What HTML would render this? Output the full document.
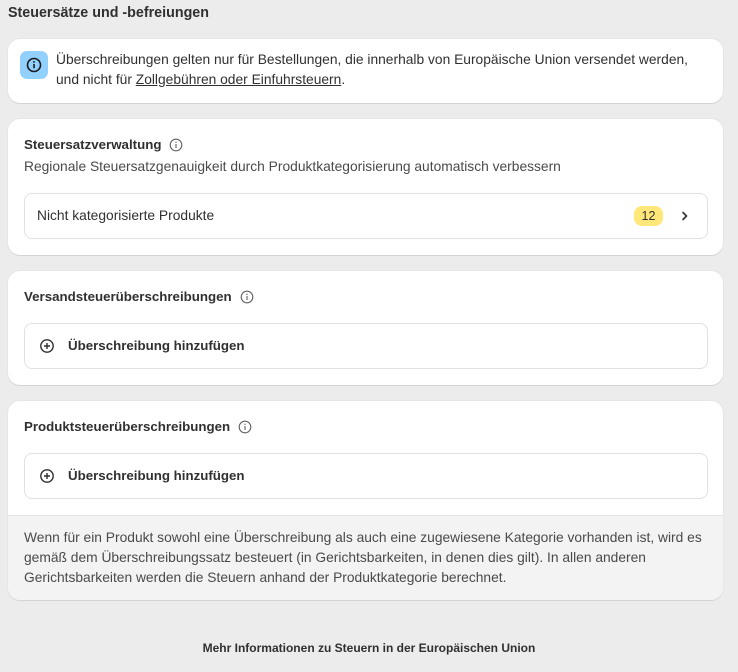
<!DOCTYPE html>
<html><head><meta charset="utf-8"><style>
*{box-sizing:border-box;margin:0;padding:0}
body{width:738px;height:672px;background:#ececec;font-family:"Liberation Sans",sans-serif;color:#303030;font-size:13.8px;position:relative;overflow:hidden}
.h{position:absolute;left:8px;top:5px;font-size:14.3px;font-weight:bold;color:#303030}
.card{position:absolute;left:8px;width:715px;background:#fff;border-radius:12px;box-shadow:0 1px 0 #d4d4d4,0 0 0 1px #e6e6e6;overflow:hidden}
.t{position:absolute;font-size:13.3px;font-weight:bold;color:#303030}
.row{position:absolute;left:16px;width:684px;height:46px;border:1px solid #e1e1e1;border-radius:8px}
.info{display:inline-block;vertical-align:middle;margin-left:8px}
.p{position:absolute;font-size:13.8px;line-height:20px}
</style></head><body>
<div class="h">Steuersätze und -befreiungen</div>

<div class="card" style="top:39px;height:64px">
 <div style="position:absolute;left:12px;top:12px;width:28px;height:28px;border-radius:7px;background:#91d0ff">
  <svg width="28" height="28" viewBox="0 0 28 28"><circle cx="14" cy="14" r="6.5" fill="none" stroke="#1a1a1a" stroke-width="1.6"/><rect x="13.2" y="13" width="1.6" height="4.2" fill="#1a1a1a"/><circle cx="14" cy="10.9" r="0.95" fill="#1a1a1a"/></svg>
 </div>
 <div class="p" style="left:48px;top:11px;width:645px">Überschreibungen gelten nur für Bestellungen, die innerhalb von Europäische Union versendet werden, und nicht für <u>Zollgebühren oder Einfuhrsteuern</u>.</div>
</div>

<div class="card" style="top:119px;height:136px">
 <div class="t" style="left:16px;top:18px">Steuersatzverwaltung<svg class="info" width="14" height="14" viewBox="0 0 14 14"><circle cx="7" cy="7" r="5.8" fill="none" stroke="#616161" stroke-width="1.1"/><rect x="6.45" y="6" width="1.1" height="4" fill="#616161"/><circle cx="7" cy="4.3" r="0.7" fill="#616161"/></svg></div>
 <div class="p" style="left:16px;top:38px;color:#4a4a4a">Regionale Steuersatzgenauigkeit durch Produktkategorisierung automatisch verbessern</div>
 <div class="row" style="top:74px">
  <div class="p" style="left:12px;top:12px">Nicht kategorisierte Produkte</div>
  <div style="position:absolute;left:609px;top:12px;width:29px;height:20px;border-radius:8px;background:#ffe779;font-size:12.5px;text-align:center;line-height:20px">12</div>
  <svg style="position:absolute;left:654px;top:15px" width="12" height="14" viewBox="0 0 12 14"><path d="M4 3.5 L7.5 7 L4 10.5" fill="none" stroke="#303030" stroke-width="1.6" stroke-linecap="round" stroke-linejoin="round"/></svg>
 </div>
</div>

<div class="card" style="top:271px;height:114px">
 <div class="t" style="left:16px;top:18px">Versandsteuerüberschreibungen<svg class="info" width="14" height="14" viewBox="0 0 14 14"><circle cx="7" cy="7" r="5.8" fill="none" stroke="#616161" stroke-width="1.1"/><rect x="6.45" y="6" width="1.1" height="4" fill="#616161"/><circle cx="7" cy="4.3" r="0.7" fill="#616161"/></svg></div>
 <div class="row" style="top:52px">
  <svg style="position:absolute;left:14px;top:14px" width="16" height="16" viewBox="0 0 16 16"><circle cx="8" cy="8" r="6.2" fill="none" stroke="#303030" stroke-width="1.4"/><path d="M8 5v6M5 8h6" stroke="#303030" stroke-width="1.4"/></svg>
  <div class="p" style="left:43px;top:12px;font-weight:bold;font-size:13.3px">Überschreibung hinzufügen</div>
 </div>
</div>

<div class="card" style="top:401px;height:199px">
 <div class="t" style="left:16px;top:18px">Produktsteuerüberschreibungen<svg class="info" width="14" height="14" viewBox="0 0 14 14"><circle cx="7" cy="7" r="5.8" fill="none" stroke="#616161" stroke-width="1.1"/><rect x="6.45" y="6" width="1.1" height="4" fill="#616161"/><circle cx="7" cy="4.3" r="0.7" fill="#616161"/></svg></div>
 <div class="row" style="top:52px">
  <svg style="position:absolute;left:14px;top:14px" width="16" height="16" viewBox="0 0 16 16"><circle cx="8" cy="8" r="6.2" fill="none" stroke="#303030" stroke-width="1.4"/><path d="M8 5v6M5 8h6" stroke="#303030" stroke-width="1.4"/></svg>
  <div class="p" style="left:43px;top:12px;font-weight:bold;font-size:13.3px">Überschreibung hinzufügen</div>
 </div>
 <div style="position:absolute;left:0;top:114px;width:715px;height:85px;background:#f3f3f3;border-top:1px solid #e3e3e3">
  <div class="p" style="left:16px;top:12px;width:692px;color:#4a4a4a">Wenn für ein Produkt sowohl eine Überschreibung als auch eine zugewiesene Kategorie vorhanden ist, wird es gemäß dem Überschreibungssatz besteuert (in Gerichtsbarkeiten, in denen dies gilt). In allen anderen Gerichtsbarkeiten werden die Steuern anhand der Produktkategorie berechnet.</div>
 </div>
</div>

<div style="position:absolute;left:0;width:738px;top:641px;text-align:center;font-size:12px;font-weight:bold;color:#303030">Mehr Informationen zu Steuern in der Europäischen Union</div>
</body></html>
